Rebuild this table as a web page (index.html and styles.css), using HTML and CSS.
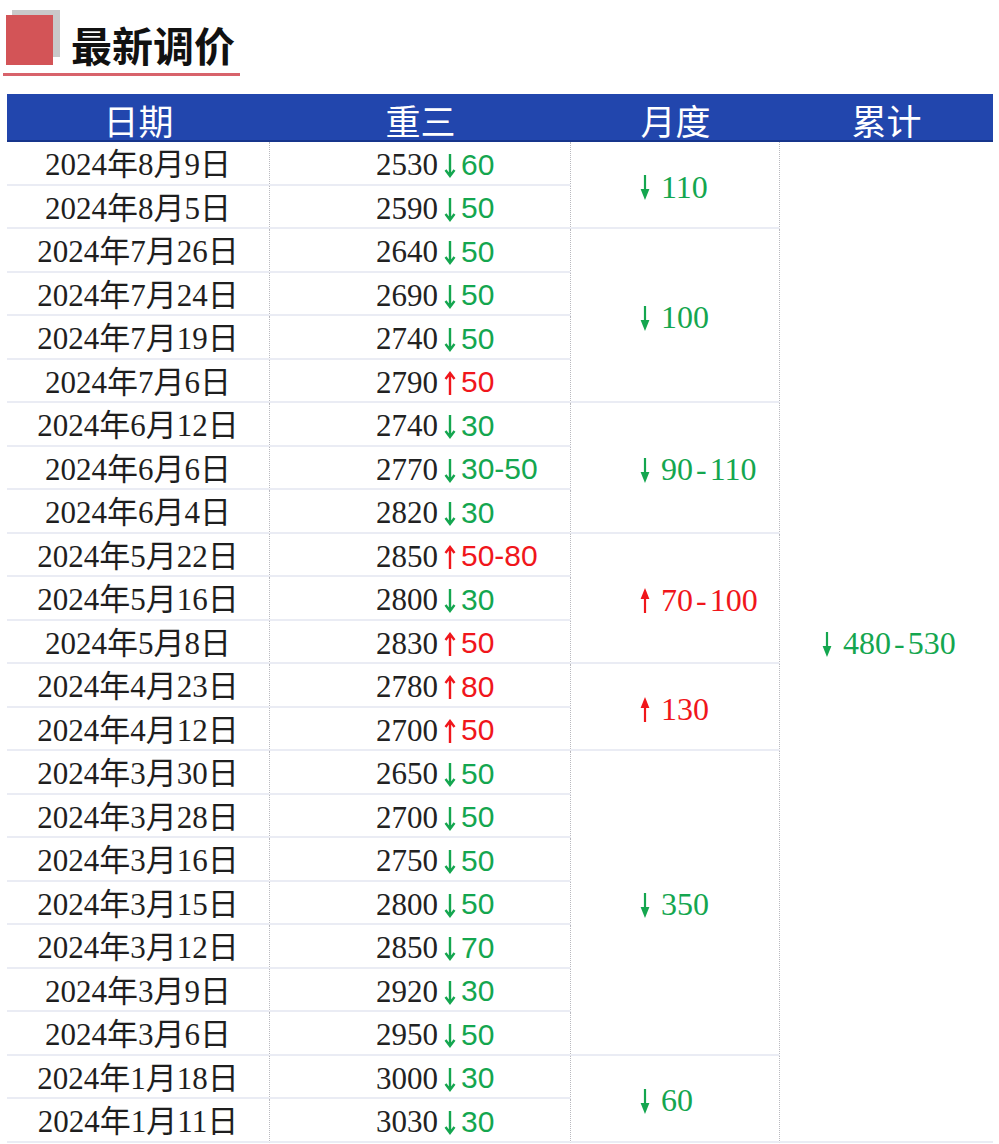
FILE: index.html
```html
<!DOCTYPE html>
<html lang="zh-CN">
<head>
<meta charset="utf-8">
<title>最新调价</title>
<link rel="stylesheet" href="styles.css">
</head>
<body>
<div class="page">
  <div class="title-wrap">
    <div class="logo"><span class="sq-grey"></span><span class="sq-red"></span></div>
    <h1 class="title">最新调价</h1>
  </div>

  <div class="table">
    <div class="th">日期</div>
    <div class="th">重三</div>
    <div class="th">月度</div>
    <div class="th">累计</div>

    <div class="c1 date">2024年8月9日</div>
    <div class="c2 price"><span class="num">2530</span><svg class="pa dn" viewBox="0 0 12 25"><path d="M6 1V23M1.5 17L6 23L10.5 17"/></svg><span class="chg dn">60</span></div>
    <div class="c3 s2 month dn"><svg class="ma" viewBox="0 0 10 25"><path class="sh" d="M5 0V15"/><path d="M0.6 14H9.4L5 25Z"/></svg><span>110</span></div>
    <div class="c4 s23 cum dn"><svg class="ma" viewBox="0 0 10 25"><path class="sh" d="M5 0V15"/><path d="M0.6 14H9.4L5 25Z"/></svg><span>480<span class="dash">-</span>530</span></div>

    <div class="c1 date">2024年8月5日</div>
    <div class="c2 price"><span class="num">2590</span><svg class="pa dn" viewBox="0 0 12 25"><path d="M6 1V23M1.5 17L6 23L10.5 17"/></svg><span class="chg dn">50</span></div>

    <div class="c1 date">2024年7月26日</div>
    <div class="c2 price"><span class="num">2640</span><svg class="pa dn" viewBox="0 0 12 25"><path d="M6 1V23M1.5 17L6 23L10.5 17"/></svg><span class="chg dn">50</span></div>
    <div class="c3 s4 month dn"><svg class="ma" viewBox="0 0 10 25"><path class="sh" d="M5 0V15"/><path d="M0.6 14H9.4L5 25Z"/></svg><span>100</span></div>

    <div class="c1 date">2024年7月24日</div>
    <div class="c2 price"><span class="num">2690</span><svg class="pa dn" viewBox="0 0 12 25"><path d="M6 1V23M1.5 17L6 23L10.5 17"/></svg><span class="chg dn">50</span></div>

    <div class="c1 date">2024年7月19日</div>
    <div class="c2 price"><span class="num">2740</span><svg class="pa dn" viewBox="0 0 12 25"><path d="M6 1V23M1.5 17L6 23L10.5 17"/></svg><span class="chg dn">50</span></div>

    <div class="c1 date">2024年7月6日</div>
    <div class="c2 price"><span class="num">2790</span><svg class="pa up" viewBox="0 0 12 25"><path d="M6 24V2M1.5 8L6 2L10.5 8"/></svg><span class="chg up">50</span></div>

    <div class="c1 date">2024年6月12日</div>
    <div class="c2 price"><span class="num">2740</span><svg class="pa dn" viewBox="0 0 12 25"><path d="M6 1V23M1.5 17L6 23L10.5 17"/></svg><span class="chg dn">30</span></div>
    <div class="c3 s3 month dn"><svg class="ma" viewBox="0 0 10 25"><path class="sh" d="M5 0V15"/><path d="M0.6 14H9.4L5 25Z"/></svg><span>90<span class="dash">-</span>110</span></div>

    <div class="c1 date">2024年6月6日</div>
    <div class="c2 price"><span class="num">2770</span><svg class="pa dn" viewBox="0 0 12 25"><path d="M6 1V23M1.5 17L6 23L10.5 17"/></svg><span class="chg dn">30-50</span></div>

    <div class="c1 date">2024年6月4日</div>
    <div class="c2 price"><span class="num">2820</span><svg class="pa dn" viewBox="0 0 12 25"><path d="M6 1V23M1.5 17L6 23L10.5 17"/></svg><span class="chg dn">30</span></div>

    <div class="c1 date">2024年5月22日</div>
    <div class="c2 price"><span class="num">2850</span><svg class="pa up" viewBox="0 0 12 25"><path d="M6 24V2M1.5 8L6 2L10.5 8"/></svg><span class="chg up">50-80</span></div>
    <div class="c3 s3 month up"><svg class="ma" viewBox="0 0 10 25"><path class="sh" d="M5 25V10"/><path d="M0.6 11H9.4L5 0Z"/></svg><span>70<span class="dash">-</span>100</span></div>

    <div class="c1 date">2024年5月16日</div>
    <div class="c2 price"><span class="num">2800</span><svg class="pa dn" viewBox="0 0 12 25"><path d="M6 1V23M1.5 17L6 23L10.5 17"/></svg><span class="chg dn">30</span></div>

    <div class="c1 date">2024年5月8日</div>
    <div class="c2 price"><span class="num">2830</span><svg class="pa up" viewBox="0 0 12 25"><path d="M6 24V2M1.5 8L6 2L10.5 8"/></svg><span class="chg up">50</span></div>

    <div class="c1 date">2024年4月23日</div>
    <div class="c2 price"><span class="num">2780</span><svg class="pa up" viewBox="0 0 12 25"><path d="M6 24V2M1.5 8L6 2L10.5 8"/></svg><span class="chg up">80</span></div>
    <div class="c3 s2 month up"><svg class="ma" viewBox="0 0 10 25"><path class="sh" d="M5 25V10"/><path d="M0.6 11H9.4L5 0Z"/></svg><span>130</span></div>

    <div class="c1 date">2024年4月12日</div>
    <div class="c2 price"><span class="num">2700</span><svg class="pa up" viewBox="0 0 12 25"><path d="M6 24V2M1.5 8L6 2L10.5 8"/></svg><span class="chg up">50</span></div>

    <div class="c1 date">2024年3月30日</div>
    <div class="c2 price"><span class="num">2650</span><svg class="pa dn" viewBox="0 0 12 25"><path d="M6 1V23M1.5 17L6 23L10.5 17"/></svg><span class="chg dn">50</span></div>
    <div class="c3 s7 month dn"><svg class="ma" viewBox="0 0 10 25"><path class="sh" d="M5 0V15"/><path d="M0.6 14H9.4L5 25Z"/></svg><span>350</span></div>

    <div class="c1 date">2024年3月28日</div>
    <div class="c2 price"><span class="num">2700</span><svg class="pa dn" viewBox="0 0 12 25"><path d="M6 1V23M1.5 17L6 23L10.5 17"/></svg><span class="chg dn">50</span></div>

    <div class="c1 date">2024年3月16日</div>
    <div class="c2 price"><span class="num">2750</span><svg class="pa dn" viewBox="0 0 12 25"><path d="M6 1V23M1.5 17L6 23L10.5 17"/></svg><span class="chg dn">50</span></div>

    <div class="c1 date">2024年3月15日</div>
    <div class="c2 price"><span class="num">2800</span><svg class="pa dn" viewBox="0 0 12 25"><path d="M6 1V23M1.5 17L6 23L10.5 17"/></svg><span class="chg dn">50</span></div>

    <div class="c1 date">2024年3月12日</div>
    <div class="c2 price"><span class="num">2850</span><svg class="pa dn" viewBox="0 0 12 25"><path d="M6 1V23M1.5 17L6 23L10.5 17"/></svg><span class="chg dn">70</span></div>

    <div class="c1 date">2024年3月9日</div>
    <div class="c2 price"><span class="num">2920</span><svg class="pa dn" viewBox="0 0 12 25"><path d="M6 1V23M1.5 17L6 23L10.5 17"/></svg><span class="chg dn">30</span></div>

    <div class="c1 date">2024年3月6日</div>
    <div class="c2 price"><span class="num">2950</span><svg class="pa dn" viewBox="0 0 12 25"><path d="M6 1V23M1.5 17L6 23L10.5 17"/></svg><span class="chg dn">50</span></div>

    <div class="c1 date">2024年1月18日</div>
    <div class="c2 price"><span class="num">3000</span><svg class="pa dn" viewBox="0 0 12 25"><path d="M6 1V23M1.5 17L6 23L10.5 17"/></svg><span class="chg dn">30</span></div>
    <div class="c3 s2 month dn"><svg class="ma" viewBox="0 0 10 25"><path class="sh" d="M5 0V15"/><path d="M0.6 14H9.4L5 25Z"/></svg><span>60</span></div>

    <div class="c1 date">2024年1月11日</div>
    <div class="c2 price"><span class="num">3030</span><svg class="pa dn" viewBox="0 0 12 25"><path d="M6 1V23M1.5 17L6 23L10.5 17"/></svg><span class="chg dn">30</span></div>
  </div>
</div>
</body>
</html>
```

FILE: styles.css
```css
* { box-sizing: border-box; }
html, body { margin: 0; padding: 0; background: #ffffff; }
body { font-family: "Liberation Serif", "Noto Sans CJK SC", serif; color: #1c1c1c; }

.page { width: 999px; height: 1144px; overflow: hidden; }

.title-wrap {
  margin-left: 3px;
  width: 237px;
  height: 76px;
  display: flex;
  align-items: flex-start;
  border-bottom: 3px solid #d8636b;
}
.logo { display: grid; width: 57px; height: 65px; flex: none; }
.logo span { grid-area: 1 / 1; display: block; }
.sq-grey { margin: 10px 0 0 9px; width: 48px; height: 47px; background: #c9c9c9; }
.sq-red { margin: 15px 0 0 3px; width: 47px; height: 50px; background: #d35457; }
.title {
  margin: 23px 0 0 11px;
  flex: none;
  white-space: nowrap;
  font-family: "Noto Sans CJK SC", sans-serif;
  font-size: 41px;
  line-height: 42px;
  font-weight: 700;
  color: #111;
}

.table {
  margin: 18px 0 0 7px;
  display: grid;
  grid-template-columns: 263px 301px 209px 213px;
  grid-template-rows: 48px repeat(23, 43.5px);
}
.th {
  background: #2246ad;
  border-bottom: 2px solid #17358c;
  color: #fff;
  font-family: "Noto Sans CJK SC", sans-serif;
  font-size: 35px;
  line-height: 1;
  display: flex;
  align-items: center;
  justify-content: center;
  padding-top: 4px;
}

.c1 { grid-column: 1; }
.c2 { grid-column: 2; }
.c3 { grid-column: 3; }
.c4 { grid-column: 4; }
.s2 { grid-row: span 2; }
.s3 { grid-row: span 3; }
.s4 { grid-row: span 4; }
.s7 { grid-row: span 7; }
.s23 { grid-row: span 23; }

.date, .price, .month, .cum {
  border-bottom: 2px solid #eaecf4;
  display: flex;
  align-items: center;
  white-space: nowrap;
  font-size: 31px;
  line-height: 1;
  padding-top: 4px;
}
.date, .price, .month { border-right: 1px dotted #b9b9bf; }

.date { justify-content: center; color: #1e1e1e; }

.price { padding-left: 106px; }
.num { color: #222; }
.pa {
  width: 12px;
  height: 25px;
  margin: 0 5px 0 6px;
  fill: none;
  stroke-width: 2.4;
  position: relative;
  top: 1px;
}
.pa path { stroke: currentColor; }
.chg { font-family: "Liberation Sans", "Noto Sans", sans-serif; font-size: 30px; }

.dn { color: #14a64f; }
.up { color: #f0161b; }

.month { padding-left: 69px; font-size: 32px; }
.cum { padding-left: 42px; font-size: 32px; border-right: none; }
.ma {
  width: 10px;
  height: 25px;
  margin-right: 11px;
  fill: currentColor;
  position: relative;
  top: 1px;
}
.ma .sh { stroke: currentColor; stroke-width: 2.2; fill: none; }
.dash { margin: 0 3px; }
```
